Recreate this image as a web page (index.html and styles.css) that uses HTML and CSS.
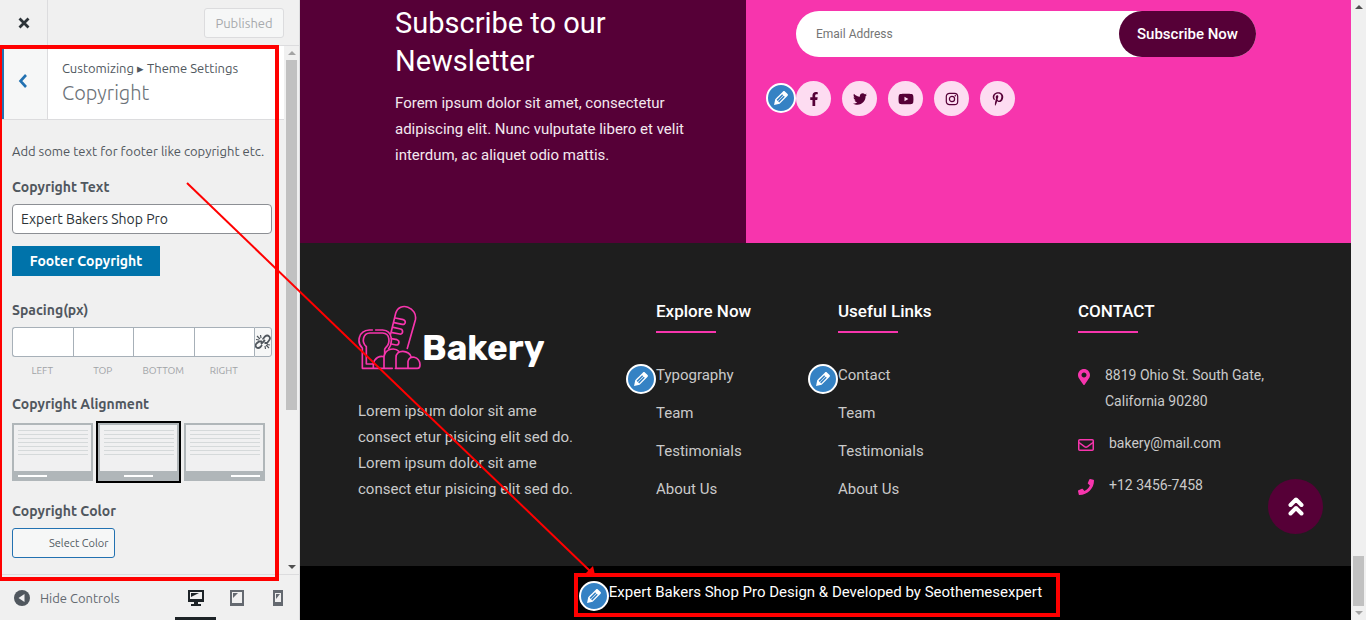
FILE: index.html
```html
<!DOCTYPE html>
<html lang="en">

<head>
    <meta charset="utf-8">
    <meta name="viewport" content="width=device-width, initial-scale=1">
    <title>Customize: Bakery</title>
    <link rel="stylesheet" href="styles.css">
</head>

<body>
    <svg class="symbols" aria-hidden="true">
        <symbol id="pencil" viewBox="0 0 20 20">
            <path d="M13.89 3.39l2.71 2.72c.46.46.42 1.24.03 1.64l-8.01 8.02-5.56 1.16 1.16-5.58s7.6-7.63 7.99-8.03c.39-.39 1.22-.39 1.68.07zm-2.73 2.79l-5.59 5.61 1.11 1.11 5.54-5.65zm-2.97 8.23l5.58-5.6-1.07-1.08-5.59 5.6z" />
        </symbol>
        <symbol id="layout" viewBox="0 0 81 58">
            <path fill="#b0b6b9" d="M0 0h81v58H0z" />
            <path fill="#f0f0f1" d="M2 2h77v46H2z" />
            <path stroke="#d5d9da" d="M6 7.500h70M6 11.500h70M6 15.500h70M6 19.500h70M6 23.500h70M6 27.500h70M6 31.500h70" />
        </symbol>
    </svg>

    <aside class="sidebar">
        <header class="sidebar-top">
            <button class="close" aria-label="Close">
                <svg width="12" height="12" viewBox="0 0 12 12"><path d="M1.500 1.500l9 9M10.500 1.500l-9 9" stroke="#2c3338" stroke-width="2.800" /></svg>
            </button>
            <button class="published" disabled>Published</button>
        </header>

        <div class="panel">
            <div class="panel-content">
                <div class="section-title">
                    <button class="back" aria-label="Back">
                        <svg width="10" height="14" viewBox="0 0 10 14"><path d="M8 1L2.500 7 8 13" fill="none" stroke="#2271b1" stroke-width="2.600" /></svg>
                    </button>
                    <div class="section-name">
                        <p>Customizing ▸ Theme Settings</p>
                        <h1>Copyright</h1>
                    </div>
                </div>

                <form class="controls">
                    <p class="description">Add some text for footer like copyright etc.</p>
                    <label class="title" for="copyrightText">Copyright Text</label>
                    <input class="text-field" id="copyrightText" type="text" value="Expert Bakers Shop Pro">
                    <button type="button" class="footer-copyright">Footer Copyright</button>

                    <p class="title spacing-title">Spacing(px)</p>
                    <div class="spacing">
                        <input type="text" id="left"><input type="text" id="top"><input type="text" id="bottom"><input type="text" id="right">
                        <button type="button" class="unlink" aria-label="Link values">
                            <svg width="16" height="16" viewBox="0 0 16 16" fill="none" stroke="#50575e" stroke-width="1.800">
                                <path d="M8 5.500V5l2-2.500c3-2.500 6.500 1 4 4L12 9H9.500M7 11l-1.500 2c-3 2.500-6.500-.5-4-3.500L4 7.500H7M6 10l4-4" />
                                <path stroke-width="1.200" d="M1 5.500l3 .5M2 2l3 3M5.500 1l.5 3M10 12l.5 3M11 11l3 3M12 10.500l3 .5" />
                            </svg>
                        </button>
                        <label for="left">LEFT</label><label for="top">TOP</label><label for="bottom">BOTTOM</label><label for="right">RIGHT</label>
                    </div>

                    <p class="title">Copyright Alignment</p>
                    <div class="alignment">
                        <label><input type="radio" name="align" aria-label="Left">
                            <svg width="81" height="58"><use href="#layout" /><path d="M6 52h29v2H6z" fill="#fff" /></svg></label>
                        <label><input type="radio" name="align" aria-label="Center" checked>
                            <svg width="81" height="58"><use href="#layout" /><path d="M26 52h29v2H26z" fill="#fff" /></svg></label>
                        <label><input type="radio" name="align" aria-label="Right">
                            <svg width="81" height="58"><use href="#layout" /><path d="M47 52h29v2H47z" fill="#fff" /></svg></label>
                    </div>

                    <p class="title color-title">Copyright Color</p>
                    <button type="button" class="select-color">Select Color</button>
                </form>
            </div>
            <div class="scrollbar">
                <span class="arrow-up light"></span>
                <div class="track"><div class="thumb panel-thumb"></div></div>
                <span class="arrow-down"></span>
            </div>
        </div>

        <footer class="sidebar-bottom">
            <button class="hide-controls">
                <svg width="16" height="16" viewBox="0 0 16 16"><circle cx="8" cy="8" r="8" fill="#50575e" /><path d="M10.500 4v8L4.500 8z" fill="#f0f0f1" /></svg>
                Hide Controls
            </button>
            <div class="devices">
                <button class="active" aria-label="Desktop">
                    <svg width="18" height="18" viewBox="0 0 18 18"><path fill="#1d2327" fill-rule="evenodd" d="M1 1h16v12h-6v2h3v2H4v-2h3v-2H1zM3 3v7h12V3z" /><path fill="#1d2327" d="M4 4h8L4 8z" /></svg>
                </button>
                <button aria-label="Tablet">
                    <svg width="18" height="18" viewBox="0 0 18 18"><path fill="#646970" fill-rule="evenodd" d="M2 1h14v16H2zM4 3v11h10V3z" /><path fill="#646970" d="M5 4h5L5 9z" /></svg>
                </button>
                <button aria-label="Mobile">
                    <svg width="18" height="18" viewBox="0 0 18 18"><path fill="#646970" fill-rule="evenodd" d="M4 1h10v16H4zM6 4v9h6V4z" /><path fill="#646970" d="M7 5h4L7 10z" /></svg>
                </button>
            </div>
        </footer>
    </aside>

    <main class="preview">
        <section class="newsletter">
            <div class="newsletter-text">
                <h2>Subscribe to our<br>Newsletter</h2>
                <p>Forem ipsum dolor sit amet, consectetur<br>adipiscing elit. Nunc vulputate libero et velit<br>interdum, ac aliquet odio mattis.</p>
            </div>
            <div class="newsletter-form">
                <form class="subscribe">
                    <input type="email" placeholder="Email Address" aria-label="Email Address">
                    <button type="button">Subscribe Now</button>
                </form>
                <div class="social editable">
                    <button class="edit" aria-label="Edit social links"><svg width="20" height="20"><use href="#pencil" /></svg></button>
                    <a href="#" aria-label="Facebook"><svg width="14" height="14" viewBox="0 0 320 512"><path d="M279.14 288l14.22-92.66h-88.91v-60.13c0-25.35 12.42-50.06 52.24-50.06h40.42V6.26S260.43 0 225.36 0c-73.22 0-121.08 44.38-121.08 124.72v70.62H22.89V288h81.39v224h100.17V288z" /></svg></a>
                    <a href="#" aria-label="Twitter"><svg width="14" height="14" viewBox="0 0 512 512"><path d="M459.37 151.716c.325 4.548.325 9.097.325 13.645 0 138.72-105.583 298.558-298.558 298.558-59.452 0-114.68-17.219-161.137-47.106 8.447.974 16.568 1.299 25.34 1.299 49.055 0 94.213-16.568 130.274-44.832-46.132-.975-84.792-31.188-98.112-72.772 6.498.974 12.995 1.624 19.818 1.624 9.421 0 18.843-1.3 27.614-3.573-48.081-9.747-84.143-51.98-84.143-102.985v-1.299c13.969 7.797 30.214 12.67 47.431 13.319-28.264-18.843-46.781-51.005-46.781-87.391 0-19.492 5.197-37.36 14.294-52.954 51.655 63.675 129.3 105.258 216.365 109.807-1.624-7.797-2.599-15.918-2.599-24.04 0-57.828 46.782-104.934 104.934-104.934 30.213 0 57.502 12.67 76.67 33.137 23.715-4.548 46.456-13.32 66.599-25.34-7.798 24.366-24.366 44.833-46.132 57.827 21.117-2.273 41.584-8.122 60.426-16.243-14.292 20.791-32.161 39.308-52.628 54.253z" /></svg></a>
                    <a href="#" aria-label="YouTube"><svg width="16" height="14" viewBox="0 0 576 512"><path d="M549.655 124.083c-6.281-23.65-24.787-42.276-48.284-48.597C458.781 64 288 64 288 64S117.22 64 74.629 75.486c-23.497 6.322-42.003 24.947-48.284 48.597-11.412 42.867-11.412 132.305-11.412 132.305s0 89.438 11.412 132.305c6.281 23.65 24.787 41.5 48.284 47.821C117.22 448 288 448 288 448s170.78 0 213.371-11.486c23.497-6.321 42.003-24.171 48.284-47.821 11.412-42.867 11.412-132.305 11.412-132.305s0-89.438-11.412-132.305zm-317.51 213.508V175.185l142.739 81.205-142.739 81.201z" /></svg></a>
                    <a href="#" aria-label="Instagram"><svg width="14" height="14" viewBox="0 0 14 14"><rect x="1.300" y="1.300" width="11.400" height="11.400" rx="3.200" fill="none" stroke="#560037" stroke-width="1.200" /><circle cx="7" cy="7" r="2.600" fill="none" stroke="#560037" stroke-width="1.200" /><circle cx="10.300" cy="3.700" r=".8" /></svg></a>
                    <a href="#" aria-label="Pinterest"><svg width="14" height="14" viewBox="0 0 384 512"><path d="M204 6.500C101.400 6.500 0 74.900 0 185.600 0 256 39.600 296 63.600 296c9.900 0 15.600-27.600 15.600-35.400 0-9.300-23.700-29.100-23.700-67.800 0-80.400 61.200-137.400 140.400-137.400 68.100 0 118.500 38.700 118.500 109.800 0 53.100-21.300 152.700-90.300 152.700-24.900 0-46.200-18-46.200-43.800 0-37.800 26.400-74.400 26.400-113.400 0-66.200-93.900-54.200-93.900 25.800 0 16.800 2.100 35.400 9.600 50.700-13.800 59.400-42 147.900-42 209.100 0 18.900 2.700 37.500 4.500 56.400 3.400 3.800 1.700 3.400 6.900 1.500 50.400-69 48.600-82.500 71.400-172.800 12.300 23.400 44.100 36 69.300 36 106.200 0 153.900-103.500 153.900-196.800C384 71.300 298.200 6.500 204 6.500z" /></svg></a>
                </div>
            </div>
        </section>

        <section class="widgets">
            <div class="about">
                <a class="logo" href="#">
                    <svg width="64" height="66" viewBox="24 21 192 198" fill="none" stroke="#f735ad" stroke-width="5" stroke-linecap="round" stroke-linejoin="round">
                        <path d="M172 151L196 66C204 28 148 8 137 46L122 108" />
                        <path d="M136 60l24 5c9 3 7 16-3 14l-25-5M130 88l22 5c9 3 7 17-3 15l-22-4M124 122l17 3c9 3 7 17-3 16l-14-3" />
                        <path d="M67 96H58C24 98 20 134 37 150V211H127M77 96H98C130 98 128 136 116 152" />
                        <path d="M72 198H49V146C34 132 38 106 60 105H98C120 106 122 134 108 148L104 154V168" />
                        <path d="M70 210V198C73 180 90 172 102 176M102 211V176C106 148 138 150 146 160" />
                        <path d="M138 211V180C136 152 180 156 184 178M174 211V190C178 170 208 174 210 200C210 208 206 211 202 211H136" />
                    </svg>
                    <span>Bakery</span>
                </a>
                <p>Lorem ipsum dolor sit ame<br>consect etur pisicing elit sed do.<br>Lorem ipsum dolor sit ame<br>consect etur pisicing elit sed do.</p>
            </div>
            <div>
                <h3>Explore Now</h3>
                <ul class="editable">
                    <li><button class="edit" aria-label="Edit menu"><svg width="20" height="20"><use href="#pencil" /></svg></button><a href="#">Typography</a></li>
                    <li><a href="#">Team</a></li>
                    <li><a href="#">Testimonials</a></li>
                    <li><a href="#">About Us</a></li>
                </ul>
            </div>
            <div>
                <h3>Useful Links</h3>
                <ul class="editable">
                    <li><button class="edit" aria-label="Edit menu"><svg width="20" height="20"><use href="#pencil" /></svg></button><a href="#">Contact</a></li>
                    <li><a href="#">Team</a></li>
                    <li><a href="#">Testimonials</a></li>
                    <li><a href="#">About Us</a></li>
                </ul>
            </div>
            <div>
                <h3>CONTACT</h3>
                <address>
                    <p>
                        <svg width="12" height="16" viewBox="0 0 384 512" fill="#f735ad"><path d="M172.268 501.67C26.97 291.031 0 269.413 0 192 0 85.961 85.961 0 192 0s192 85.961 192 192c0 77.413-26.97 99.031-172.268 309.67-9.535 13.774-29.93 13.773-39.464 0zM192 272c44.183 0 80-35.817 80-80s-35.817-80-80-80-80 35.817-80 80 35.817 80 80 80z" /></svg>
                        <span>8819 Ohio St. South Gate,<br>California 90280</span>
                    </p>
                    <p>
                        <svg width="16" height="16" viewBox="0 0 16 16" fill="none" stroke="#f735ad" stroke-width="1.500"><rect x=".75" y="2.750" width="14.500" height="10.500" rx="1" /><path d="M1 5.500l5.500 4.200c1 .7 2 .7 3 0L15 5.500" /></svg>
                        <span>bakery@mail.com</span>
                    </p>
                    <p>
                        <svg width="16" height="16" viewBox="0 0 512 512" fill="#f735ad"><path d="M493.4 24.6l-104-24c-11.3-2.6-22.9 3.3-27.5 13.9l-48 112c-4.2 9.8-1.4 21.3 6.9 28l60.6 49.6c-36 76.7-98.9 140.5-177.2 177.2l-49.6-60.6c-6.8-8.3-18.2-11.1-28-6.9l-112 48C3.9 366.5-2 378.1.6 389.4l24 104C27.1 504.2 36.7 512 48 512c256.1 0 464-207.5 464-464 0-11.2-7.7-20.9-18.6-23.4z" /></svg>
                        <span>+12 3456-7458</span>
                    </p>
                </address>
            </div>
        </section>

        <div class="copyright">
            <p class="editable">
                <button class="edit" aria-label="Edit copyright"><svg width="20" height="20"><use href="#pencil" /></svg></button>Expert Bakers Shop Pro Design &amp; Developed by Seothemesexpert
            </p>
        </div>

        <a class="to-top" href="#" aria-label="Back to top">
            <svg width="16" height="20" viewBox="0 0 16 20" fill="none" stroke="#fff" stroke-width="4" stroke-linecap="round" stroke-linejoin="round"><path d="M2.500 8L8 2.500 13.500 8M2.500 16.500L8 11l5.500 5.500" /></svg>
        </a>
    </main>

    <div class="scrollbar">
        <span class="arrow-up"></span>
        <div class="track"><div class="thumb page-thumb"></div></div>
        <span class="arrow-down light"></span>
    </div>

    <!-- red callouts -->
    <svg class="callouts" aria-hidden="true" fill="none" stroke="#f00">
        <rect x="0" y="47" width="277" height="532" stroke-width="4" />
        <rect x="576" y="575" width="482" height="40" stroke-width="4" />
        <path d="M187 183L590 571" stroke-width="2" />
        <path d="M595 575l-9-2 7-7z" fill="#f00" stroke="none" />
    </svg>
</body>

</html>
```
FILE: styles.css
```css
* {
    box-sizing: border-box;
}

body {
    display: flex;
    height: 100vh;
    margin: 0;
    overflow: hidden;
    position: relative;
    font-family: Roboto, sans-serif;
}

h1, h2, h3, p, ul {
    margin: 0;
    padding: 0;
    font-weight: 400;
}

button, input {
    font-family: inherit;
    margin: 0;
    padding: 0;
    border: 0;
}

button {
    background: none;
    cursor: pointer;
}

svg {
    display: block;
    flex: none;
}

.symbols {
    position: absolute;
    width: 0;
    height: 0;
}

/* Sidebar */
.sidebar {
    display: flex;
    flex-direction: column;
    flex: none;
    width: 300px;
    background: #f0f0f0;
    border-right: 1px solid #dcdcde;
    color: #50575e;
    font-family: Ubuntu, "Noto Sans", sans-serif;
    font-size: 13px;
    line-height: 20px;
}

.sidebar-top {
    display: flex;
    align-items: center;
    justify-content: space-between;
    height: 46px;
    padding-right: 15px;
    border-bottom: 1px solid #dcdcde;
}

.close {
    display: grid;
    place-items: center;
    width: 48px;
    height: 45px;
    border-right: 1px solid #dcdcde;
}

.published {
    width: 80px;
    height: 30px;
    border: 1px solid #dcdcde;
    border-radius: 3px;
    background: #f6f7f7;
    color: #a7aaad;
    font-size: 13px;
}

.panel {
    display: flex;
    flex: 1;
    min-height: 0;
}

.panel-content {
    flex: 1;
    overflow: hidden;
}

.section-title {
    display: flex;
    height: 74px;
    background: #fff;
    border-bottom: 1px solid #dcdcde;
}

.back {
    display: grid;
    place-items: center;
    width: 48px;
    padding: 0 5px 3px 0;
    background: #f6f7f7;
    border-left: 4px solid #2271b1;
    border-right: 1px solid #dcdcde;
}

.section-name {
    padding: 12px 14px;
}

.section-name h1 {
    color: #6c7278;
    font-family: Ubuntu, "Open Sans", sans-serif;
    font-size: 20px;
    font-weight: 300;
    line-height: 30px;
}

.controls {
    padding: 21px 12px;
}

.description {
    margin-bottom: 16px;
}

.title {
    display: block;
    margin: 15px 0 7px;
    font-size: 14px;
    font-weight: 600;
}

.text-field {
    display: block;
    width: 100%;
    height: 30px;
    padding: 0 8px;
    border: 1px solid #8c8f94;
    border-radius: 4px;
    background: #fff;
    color: #2c3338;
    font-size: 14px;
}

.footer-copyright {
    width: 148px;
    height: 30px;
    margin-top: 12px;
    background: #0073aa;
    color: #fff;
    font-size: 14px;
    font-weight: 600;
}

.spacing-title {
    margin-top: 24px;
}

.spacing {
    display: grid;
    grid-template-columns: repeat(4, 1fr) 18px;
}

.spacing input {
    width: 100%;
    height: 30px;
    border: 1px solid #a7b0b8;
    border-right: 0;
    background: #fff;
}

.spacing input:first-child {
    border-radius: 3px 0 0 3px;
}

.unlink {
    display: grid;
    place-items: center;
    border: 1px solid #a7b0b8;
    border-radius: 0 3px 3px 0;
    background: #f6f7f7;
}

.spacing label {
    padding-top: 6px;
    color: #a0a3a6;
    font-size: 10px;
    line-height: 16px;
    text-align: center;
}

.alignment {
    display: flex;
    align-items: center;
    gap: 3px;
}

.alignment label {
    display: flex;
}

.alignment input {
    appearance: none;
    width: 0;
}

.alignment label:has(:checked) {
    border: 2px solid #000;
}

.color-title {
    margin-top: 18px;
}

.select-color {
    height: 30px;
    padding: 0 6px 0 36px;
    border: 1px solid #2271b1;
    border-radius: 3px;
    background: #f6f7f7;
    color: #50575e;
    font-size: 11px;
}

.sidebar-bottom {
    display: flex;
    justify-content: space-between;
    height: 46px;
    border-top: 1px solid #dcdcde;
}

.hide-controls {
    display: flex;
    align-items: center;
    gap: 10px;
    padding-left: 14px;
    color: #646970;
    font-size: 13px;
}

.devices {
    display: flex;
    padding-right: 1px;
}

.devices button {
    display: grid;
    place-items: center;
    width: 41px;
    padding-top: 3px;
    border-bottom: 3px solid transparent;
}

.devices .active {
    border-color: #1d2327;
}

/* Scrollbars */
.scrollbar {
    display: flex;
    flex-direction: column;
    align-items: center;
    flex: none;
    width: 15px;
    padding: 5px 0;
    background: #f0f0f0;
}

.track {
    display: flex;
    flex: 1;
    flex-direction: column;
    width: 11px;
    margin: 5px 0;
}

.thumb {
    background: #c1c1c1;
}

.panel-thumb {
    height: 70%;
}

.page-thumb {
    height: 50px;
    margin-top: auto;
}

.arrow-up,
.arrow-down {
    border: 4px solid transparent;
    border-top: 0;
    border-bottom-color: #505050;
}

.arrow-down {
    border-top: 4px solid #505050;
    border-bottom: 0;
}

.arrow-up.light {
    border-bottom-color: #a3a3a3;
}

.arrow-down.light {
    border-top-color: #a3a3a3;
}

/* Site preview */
.preview {
    display: flex;
    flex: 1;
    flex-direction: column;
    min-width: 0;
    position: relative;
    background: #000;
    color: #fff;
    font-size: 15px;
    line-height: 26px;
}

.preview a {
    color: inherit;
    text-decoration: none;
}

.editable {
    position: relative;
}

.edit {
    display: grid;
    place-items: center;
    position: absolute;
    top: 2px;
    right: 100%;
    width: 30px;
    height: 30px;
    border: 2px solid #fff;
    border-radius: 50%;
    background: #3582c4;
    fill: #fff;
}

.newsletter {
    display: grid;
    grid-template-columns: 446fr 605fr;
}

.newsletter-text {
    padding: 4px 0 75px 95px;
    background: #560037;
}

.newsletter-text h2 {
    margin-bottom: 10px;
    font-size: 29px;
    line-height: 38px;
}

.newsletter-text p {
    color: #f3e8ef;
}

.newsletter-form {
    padding: 11px 95px 0 50px;
    background: #f735ad;
}

.subscribe {
    display: flex;
    height: 46px;
    border-radius: 23px;
    background: #fff;
}

.subscribe input {
    flex: 1;
    min-width: 0;
    padding-left: 20px;
    background: none;
    font-size: 12px;
    outline: none;
}

.subscribe button {
    width: 137px;
    border-radius: 23px;
    background: #560037;
    color: #fff;
    font-size: 15px;
    font-weight: 500;
}

.social {
    display: flex;
    gap: 11px;
    margin-top: 24px;
}

.social a {
    display: grid;
    place-items: center;
    width: 35px;
    height: 35px;
    border-radius: 50%;
    background: #fddcf1;
    fill: #560037;
}

.widgets {
    display: grid;
    grid-template-columns: 298fr 182fr 240fr 273fr;
    padding: 55px 0 64px 58px;
    background: #1e1e1e;
    color: #cacaca;
}

.logo {
    display: flex;
    align-items: center;
    margin: 7px 0 27px;
}

.logo span {
    padding-top: 20px;
    color: #fff;
    font-family: Rubik, Inter, sans-serif;
    font-size: 35px;
    font-weight: 700;
    line-height: 46px;
}

.widgets h3 {
    color: #fff;
    font-size: 17px;
    font-weight: 500;
}

.widgets h3::after {
    content: "";
    display: block;
    width: 60px;
    height: 2px;
    margin: 7px 0 29px;
    background: #f735ad;
}

.widgets ul {
    display: grid;
    gap: 12px;
    list-style: none;
}

address {
    display: grid;
    gap: 16px;
    font-size: 14px;
    font-style: normal;
}

address p {
    display: flex;
    gap: 15px;
}

address svg {
    margin-top: 7px;
}

.copyright {
    flex: 1;
    display: flex;
    align-items: flex-start;
    justify-content: center;
    padding-top: 13px;
}

.to-top {
    display: grid;
    place-items: center;
    position: absolute;
    right: 28px;
    bottom: 86px;
    width: 55px;
    height: 55px;
    border-radius: 50%;
    background: #560037;
}

.callouts {
    position: absolute;
    top: 0;
    left: 0;
    width: 100%;
    height: 100%;
    pointer-events: none;
}
```
